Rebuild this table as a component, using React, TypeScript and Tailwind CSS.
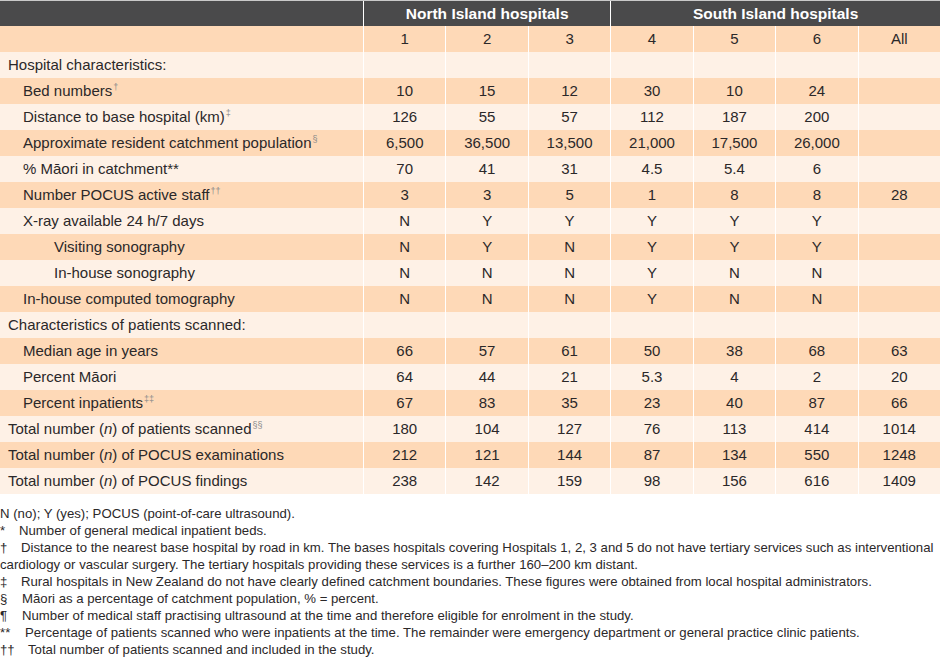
type Row = {
  label: string
  sup?: string
  level: 0 | 1 | 2
  italicN?: boolean
  values: string[]
}

const rows: Row[] = [
  { label: "Hospital characteristics:", level: 0, values: ["", "", "", "", "", "", ""] },
  { label: "Bed numbers", sup: "†", level: 1, values: ["10", "15", "12", "30", "10", "24", ""] },
  { label: "Distance to base hospital (km)", sup: "‡", level: 1, values: ["126", "55", "57", "112", "187", "200", ""] },
  { label: "Approximate resident catchment population", sup: "§", level: 1, values: ["6,500", "36,500", "13,500", "21,000", "17,500", "26,000", ""] },
  { label: "% Māori in catchment**", level: 1, values: ["70", "41", "31", "4.5", "5.4", "6", ""] },
  { label: "Number POCUS active staff", sup: "††", level: 1, values: ["3", "3", "5", "1", "8", "8", "28"] },
  { label: "X-ray available 24 h/7 days", level: 1, values: ["N", "Y", "Y", "Y", "Y", "Y", ""] },
  { label: "Visiting sonography", level: 2, values: ["N", "Y", "N", "Y", "Y", "Y", ""] },
  { label: "In-house sonography", level: 2, values: ["N", "N", "N", "Y", "N", "N", ""] },
  { label: "In-house computed tomography", level: 1, values: ["N", "N", "N", "Y", "N", "N", ""] },
  { label: "Characteristics of patients scanned:", level: 0, values: ["", "", "", "", "", "", ""] },
  { label: "Median age in years", level: 1, values: ["66", "57", "61", "50", "38", "68", "63"] },
  { label: "Percent Māori", level: 1, values: ["64", "44", "21", "5.3", "4", "2", "20"] },
  { label: "Percent inpatients", sup: "‡‡", level: 1, values: ["67", "83", "35", "23", "40", "87", "66"] },
  { label: "of patients scanned", sup: "§§", level: 0, italicN: true, values: ["180", "104", "127", "76", "113", "414", "1014"] },
  { label: "of POCUS examinations", level: 0, italicN: true, values: ["212", "121", "144", "87", "134", "550", "1248"] },
  { label: "of POCUS findings", level: 0, italicN: true, values: ["238", "142", "159", "98", "156", "616", "1409"] },
]

const notes: [string, string, string[]][] = [
  ["*", "w-[19px]", ["Number of general medical inpatient beds."]],
  [
    "†",
    "w-[21px]",
    [
      "Distance to the nearest base hospital by road in km. The bases hospitals covering Hospitals 1, 2, 3 and 5 do not have tertiary services such as interventional",
      "cardiology or vascular surgery. The tertiary hospitals providing these services is a further 160–200 km distant.",
    ],
  ],
  ["‡", "w-[21px]", ["Rural hospitals in New Zealand do not have clearly defined catchment boundaries. These figures were obtained from local hospital administrators."]],
  ["§", "w-[22px]", ["Māori as a percentage of catchment population, % = percent."]],
  ["¶", "w-[22px]", ["Number of medical staff practising ultrasound at the time and therefore eligible for enrolment in the study."]],
  ["**", "w-[25px]", ["Percentage of patients scanned who were inpatients at the time. The remainder were emergency department or general practice clinic patients."]],
  ["††", "w-[28px]", ["Total number of patients scanned and included in the study."]],
]

const indent = ["pl-[8px]", "pl-[23px]", "pl-[54px]"]

export default function App() {
  return (
    <div className="w-[940px] h-[659px] bg-white text-[#2b2829] font-['Liberation_Sans',Arial,sans-serif] overflow-hidden">
      <div className="border-t border-[#c9c9c9] grid grid-cols-[363px_repeat(7,1fr)] gap-x-px bg-white text-[15px]">
        <div className="h-[25px] bg-[#4a4a4b]"></div>
        <div className="col-span-3 h-[25px] bg-[#4a4a4b] flex items-center justify-center text-white font-bold text-[15.5px]">
          North Island hospitals
        </div>
        <div className="col-span-4 h-[25px] bg-[#4a4a4b] flex items-center justify-center text-white font-bold text-[15.5px]">
          South Island hospitals
        </div>

        <div className="h-[26px] bg-[#fed9b7]"></div>
        {["1", "2", "3", "4", "5", "6", "All"].map((h) => (
          <div key={h} className="h-[26px] bg-[#fed9b7] flex items-center justify-center">
            {h}
          </div>
        ))}

        {rows.map((r, i) => {
          const bg = i % 2 === 0 ? "bg-[#fef1e6]" : "bg-[#fed9b7]"
          return (
            <div key={i} className="contents">
              <div className={`h-[26px] flex items-center whitespace-nowrap ${bg} ${indent[r.level]}`}>
                {r.italicN ? (
                  <span>
                    Total number (<i>n</i>) {r.label}
                  </span>
                ) : (
                  <span>{r.label}</span>
                )}
                {r.sup && (
                  <sup className="text-[9px] text-[#8a8a8a] -top-[4px] ml-px">{r.sup}</sup>
                )}
              </div>
              {r.values.map((v, j) => (
                <div key={j} className={`h-[26px] flex items-center justify-center ${bg}`}>
                  {v}
                </div>
              ))}
            </div>
          )
        })}
      </div>

      <div className="mt-[11px] text-[13.2px] leading-[17px] whitespace-nowrap">
        <p>N (no); Y (yes); POCUS (point-of-care ultrasound).</p>
        {notes.map(([sym, w, lines]) => (
          <div key={sym}>
            <p>
              <span className={`inline-block ${w}`}>{sym}</span>
              {lines[0]}
            </p>
            {lines.slice(1).map((l) => (
              <p key={l}>{l}</p>
            ))}
          </div>
        ))}
      </div>
    </div>
  )
}
